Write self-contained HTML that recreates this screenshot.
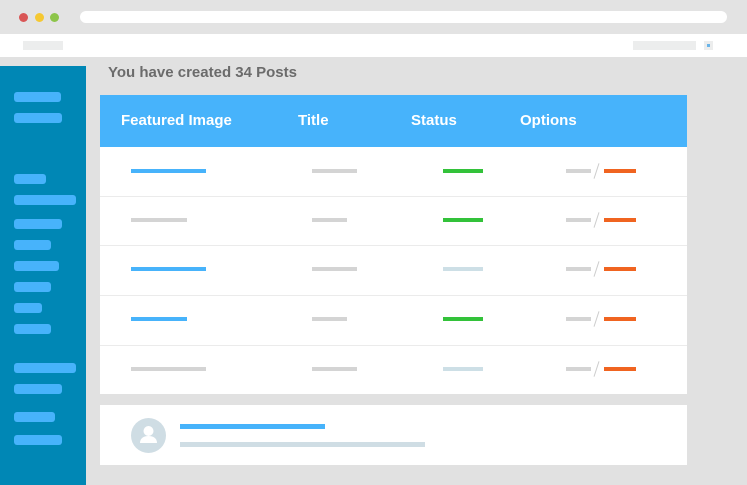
<!DOCTYPE html><html><head><style>
*{margin:0;padding:0;box-sizing:border-box}
body{width:747px;height:485px;background:#e1e1e1;position:relative;overflow:hidden;font-family:"Liberation Sans",sans-serif}
.a{position:absolute}
.sb{position:absolute;left:14px;height:10px;background:#47b3fb;border-radius:3px}
.b{position:absolute;height:4px}
</style></head><body>
<div class="a" style="left:0;top:0;width:747px;height:34px;background:#e3e3e3"></div>
<div class="a" style="left:19px;top:13px;width:9px;height:9px;border-radius:50%;background:#d95656"></div>
<div class="a" style="left:35px;top:13px;width:9px;height:9px;border-radius:50%;background:#f5c832"></div>
<div class="a" style="left:50px;top:13px;width:9px;height:9px;border-radius:50%;background:#8dc54a"></div>
<div class="a" style="left:80px;top:11px;width:647px;height:12px;border-radius:6px;background:#fff"></div>
<div class="a" style="left:0;top:34px;width:747px;height:23px;background:#fff"></div>
<div class="a" style="left:23px;top:41px;width:40px;height:9px;background:#eceded"></div>
<div class="a" style="left:633px;top:41px;width:63px;height:9px;background:#eceded"></div>
<div class="a" style="left:704px;top:41px;width:9px;height:9px;background:#eceded"></div>
<div class="a" style="left:707px;top:44px;width:3px;height:3px;background:#6ab4e8"></div>
<div class="a" style="left:0;top:66px;width:86px;height:419px;background:#0087b5"></div>
<div class="sb" style="top:92px;width:47px"></div><div class="sb" style="top:113px;width:48px"></div>
<div class="sb" style="top:174px;width:32px"></div><div class="sb" style="top:195px;width:62px"></div>
<div class="sb" style="top:219px;width:48px"></div><div class="sb" style="top:240px;width:37px"></div>
<div class="sb" style="top:261px;width:45px"></div><div class="sb" style="top:282px;width:37px"></div>
<div class="sb" style="top:303px;width:28px"></div><div class="sb" style="top:324px;width:37px"></div>
<div class="sb" style="top:363px;width:62px"></div><div class="sb" style="top:384px;width:48px"></div>
<div class="sb" style="top:412px;width:41px"></div><div class="sb" style="top:435px;width:48px"></div>
<div class="a" style="left:108px;top:64px;font-size:15px;font-weight:bold;color:#6b6b6b">You have created 34 Posts</div>
<div class="a" style="left:100px;top:95px;width:587px;height:52px;background:#47b3fb;color:#fff;font-size:15px;font-weight:bold">
<span class="a" style="left:21px;top:17px">Featured Image</span><span class="a" style="left:198px;top:17px">Title</span><span class="a" style="left:311px;top:17px">Status</span><span class="a" style="left:420px;top:17px">Options</span></div>
<div class="a" style="left:100px;top:147px;width:587px;height:247px;background:#fff"></div>
<div class="a" style="left:100px;top:196px;width:587px;height:1px;background:#ebebeb"></div>
<div class="a" style="left:100px;top:245px;width:587px;height:1px;background:#ebebeb"></div>
<div class="a" style="left:100px;top:295px;width:587px;height:1px;background:#ebebeb"></div>
<div class="a" style="left:100px;top:345px;width:587px;height:1px;background:#ebebeb"></div>
<div class="b" style="left:131px;top:169px;width:75px;background:#47b3fb"></div>
<div class="b" style="left:131px;top:218px;width:56px;background:#d4d4d4"></div>
<div class="b" style="left:131px;top:267px;width:75px;background:#47b3fb"></div>
<div class="b" style="left:131px;top:317px;width:56px;background:#47b3fb"></div>
<div class="b" style="left:131px;top:367px;width:75px;background:#d4d4d4"></div>
<div class="b" style="left:312px;top:169px;width:45px;background:#d4d4d4"></div>
<div class="b" style="left:312px;top:218px;width:35px;background:#d4d4d4"></div>
<div class="b" style="left:312px;top:267px;width:45px;background:#d4d4d4"></div>
<div class="b" style="left:312px;top:317px;width:35px;background:#d4d4d4"></div>
<div class="b" style="left:312px;top:367px;width:45px;background:#d4d4d4"></div>
<div class="b" style="left:443px;top:169px;width:40px;background:#33c23a"></div>
<div class="b" style="left:443px;top:218px;width:40px;background:#33c23a"></div>
<div class="b" style="left:443px;top:267px;width:40px;background:#cddfe6"></div>
<div class="b" style="left:443px;top:317px;width:40px;background:#33c23a"></div>
<div class="b" style="left:443px;top:367px;width:40px;background:#cddfe6"></div>
<div class="b" style="left:566px;top:169px;width:25px;background:#d4d4d4"></div><div class="a" style="left:596px;top:163px;width:1px;height:16px;background:#ccc;transform:rotate(18deg)"></div><div class="b" style="left:604px;top:169px;width:32px;background:#f06420"></div>
<div class="b" style="left:566px;top:218px;width:25px;background:#d4d4d4"></div><div class="a" style="left:596px;top:212px;width:1px;height:16px;background:#ccc;transform:rotate(18deg)"></div><div class="b" style="left:604px;top:218px;width:32px;background:#f06420"></div>
<div class="b" style="left:566px;top:267px;width:25px;background:#d4d4d4"></div><div class="a" style="left:596px;top:261px;width:1px;height:16px;background:#ccc;transform:rotate(18deg)"></div><div class="b" style="left:604px;top:267px;width:32px;background:#f06420"></div>
<div class="b" style="left:566px;top:317px;width:25px;background:#d4d4d4"></div><div class="a" style="left:596px;top:311px;width:1px;height:16px;background:#ccc;transform:rotate(18deg)"></div><div class="b" style="left:604px;top:317px;width:32px;background:#f06420"></div>
<div class="b" style="left:566px;top:367px;width:25px;background:#d4d4d4"></div><div class="a" style="left:596px;top:361px;width:1px;height:16px;background:#ccc;transform:rotate(18deg)"></div><div class="b" style="left:604px;top:367px;width:32px;background:#f06420"></div>
<div class="a" style="left:100px;top:405px;width:587px;height:60px;background:#fff"></div>
<svg class="a" style="left:131px;top:418px" width="35" height="35" viewBox="0 0 35 35"><circle cx="17.5" cy="17.5" r="17.5" fill="#cfdde4"/><circle cx="17.5" cy="13" r="5" fill="#fff"/><path d="M9 25c0-5 4-7 8.5-7s8.5 2 8.5 7z" fill="#fff"/></svg>
<div class="b" style="left:180px;top:424px;width:145px;background:#47b3fb;height:5px"></div>
<div class="b" style="left:180px;top:442px;width:245px;background:#cfdde4;height:5px"></div>
</body></html>
